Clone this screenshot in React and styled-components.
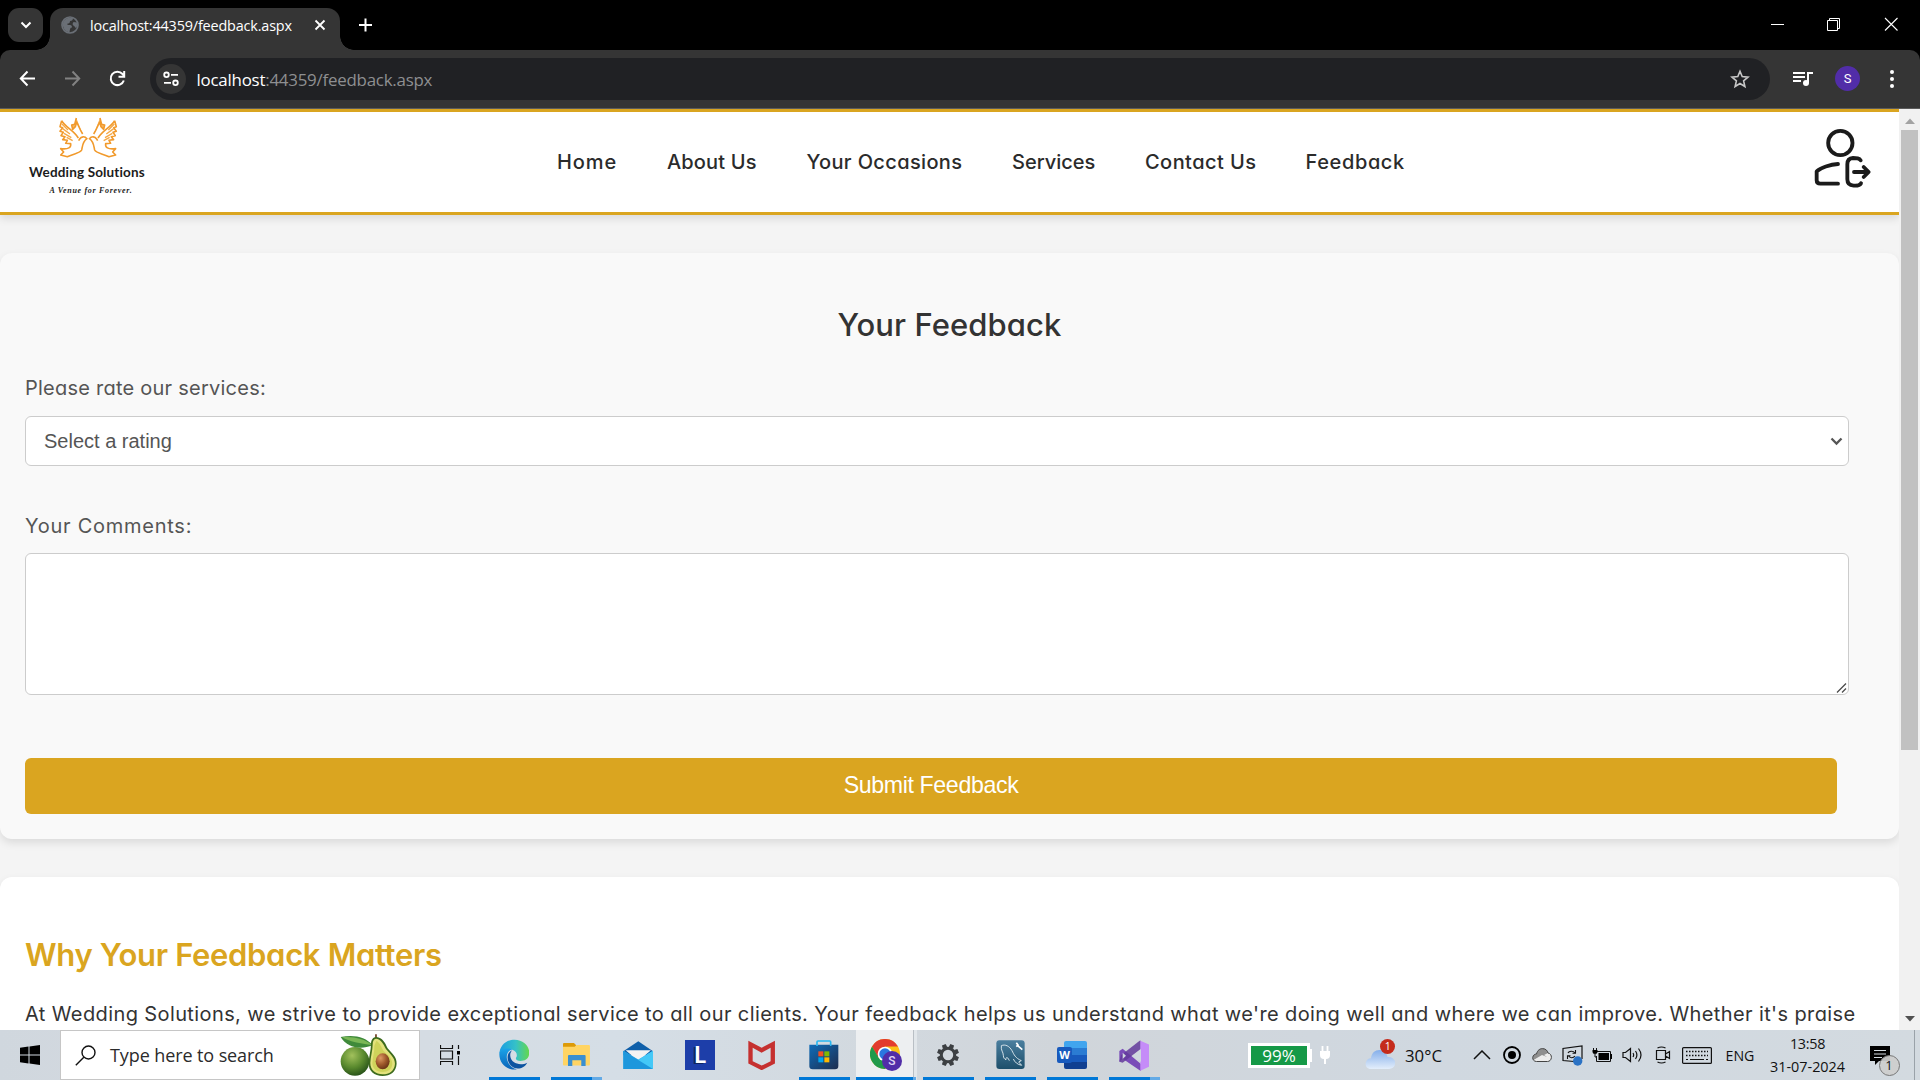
import React from "react";
import styled, { createGlobalStyle } from "styled-components";

const ui = '"Open Sans", "Noto Sans", sans-serif';
const brand = 'Inter, "Open Sans", sans-serif';
const gold = "#daa520";

const GlobalStyle = createGlobalStyle`
  * { box-sizing: border-box; }
  html, body { margin: 0; padding: 0; overflow: hidden; }
  svg { display: block; flex: none; }
`;

const Screen = styled.div`
  display: flex;
  flex-direction: column;
  width: 1920px;
  height: 1080px;
  overflow: hidden;
  background: #000;
`;

/* Browser frame */
const TabStrip = styled.div`
  display: flex;
  height: 50px;
  flex: none;
  background: #000;
  color: #fff;
`;
const TabSearch = styled.div`
  display: flex;
  align-items: center;
  justify-content: center;
  width: 35px;
  height: 34px;
  margin: 8px 7px 0 8px;
  border-radius: 11px;
  background: #353535;
`;
const Tab = styled.div`
  position: relative;
  display: flex;
  align-items: center;
  width: 290px;
  height: 42px;
  margin-top: 8px;
  padding: 0 0 8px 11px;
  border-radius: 13px 13px 0 0;
  background: #353535;
  &::before, &::after {
    content: "";
    position: absolute;
    bottom: 0;
    width: 14px;
    height: 14px;
  }
  &::before { left: -14px; background: radial-gradient(circle at 0 0, transparent 13.5px, #353535 14px); }
  &::after { right: -14px; background: radial-gradient(circle at 100% 0, transparent 13.5px, #353535 14px); }
`;
const TabTitle = styled.span`
  width: 224px;
  margin-left: 11px;
  padding-top: 1px;
  font: 14.4px/20px ${ui};
  letter-spacing: -0.16px;
  white-space: nowrap;
`;
const NewTab = styled.div`
  display: flex;
  margin: 18px 0 0 19px;
  flex: 1;
`;
const WindowButtons = styled.div`
  display: flex;
  gap: 43px;
  padding: 17px 22px 0 0;
`;
const Toolbar = styled.div`
  display: flex;
  align-items: center;
  height: 59px;
  flex: none;
  padding: 0 19px 1px 19px;
  border-radius: 10px 10px 0 0;
  border-bottom: 1px solid #5b5b5b;
  background: #353535;
`;
const NavButtons = styled.div`
  display: flex;
  gap: 28px;
  width: 131px;
`;
const Omnibox = styled.div`
  display: flex;
  align-items: center;
  width: 1620px;
  height: 42px;
  padding: 0 20px 0 6px;
  border-radius: 21px;
  background: #202124;
`;
const SiteInfo = styled.div`
  display: flex;
  align-items: center;
  justify-content: center;
  width: 30px;
  height: 30px;
  border-radius: 50%;
  background: #353535;
`;
const Url = styled.span`
  flex: 1;
  margin-left: 10.5px;
  padding-top: 2px;
  font: 16.9px/24px ${ui};
  letter-spacing: -0.23px;
  color: #8e8f91;
  white-space: nowrap;
  b { font-weight: 400; color: #fff; }
`;
const ToolbarEnd = styled.div`
  display: flex;
  align-items: center;
  margin-left: 23px;
`;
const Avatar = styled.div`
  width: 25px;
  height: 25px;
  margin: 0 30px 0 22px;
  border-radius: 50%;
  background: #512da8;
  color: #fff;
  font: 13px/25px Roboto, sans-serif;
  text-align: center;
`;

/* Web page */
const Viewport = styled.div`
  display: flex;
  height: 921px;
  flex: none;
  overflow: hidden;
`;
const Page = styled.main`
  width: 1899px;
  overflow: hidden;
  background: #f4f4f4;
  font-family: ${brand};
  font-feature-settings: "cv11";
`;
const ScrollTrack = styled.div`
  display: flex;
  flex-direction: column;
  align-items: center;
  width: 21px;
  background: #f1f1f1;
`;
const ScrollArrow = styled.div`
  height: 15px;
  padding-top: ${(p) => p.$pad}px;
`;
const ScrollThumb = styled.div`
  width: 17px;
  height: 620px;
  margin: 6px 0 auto;
  background: #c1c1c1;
`;
const Header = styled.header`
  display: flex;
  height: 106px;
  border-top: 3px solid ${gold};
  border-bottom: 3px solid ${gold};
  background: #fff;
  box-shadow: 0 4px 8px rgba(0, 0, 0, 0.1);
`;
const Logo = styled.div`
  display: flex;
  flex-direction: column;
  align-items: center;
  width: 122px;
  height: 84px;
  margin: 4px 0 0 26px;
  color: #1c1c1c;
`;
const LogoMark = styled.div`
  padding-left: 3px;
`;
const LogoName = styled.div`
  margin-top: 5px;
  font: 700 13.5px/16px Lato, sans-serif;
  letter-spacing: 0.15px;
  white-space: nowrap;
`;
const LogoTag = styled.div`
  margin-top: 5px;
  padding-left: 8px;
  font: italic 700 8px/11px "Liberation Serif", serif;
  letter-spacing: 0.7px;
  white-space: nowrap;
`;
const Menu = styled.nav`
  display: flex;
  gap: 50px;
  width: 1253px;
  padding: 36px 0 0 409px;
`;
const MenuLink = styled.a`
  width: ${(p) => p.$w}px;
  font-weight: 500;
  font-size: 20px;
  line-height: 28px;
  letter-spacing: ${(p) => p.$ls}px;
  white-space: nowrap;
  color: #2b2b2b;
`;
const SignOut = styled.a`
  margin: 15px 0 0 412px;
`;
const Card = styled.section`
  display: flex;
  flex-direction: column;
  align-items: flex-start;
  height: 586px;
  margin-top: 38px;
  padding: 0 25px;
  border-radius: 12px;
  background: ${(p) => p.$bg};
  box-shadow: 0 4px 8px rgba(0, 0, 0, 0.1);
`;
const Heading = styled.h2`
  margin: ${(p) => p.$top}px 0 0;
  align-self: ${(p) => (p.$center ? "center" : "flex-start")};
  font-size: 31px;
  line-height: 44px;
  font-weight: ${(p) => p.$weight};
  letter-spacing: ${(p) => p.$ls}px;
  white-space: nowrap;
  color: ${(p) => p.$color};
`;
const Label = styled.label`
  margin-top: ${(p) => p.$top}px;
  font-size: 20px;
  line-height: 30px;
  letter-spacing: ${(p) => p.$ls}px;
  white-space: nowrap;
  color: #555;
`;
const Field = styled.div`
  position: relative;
  display: flex;
  margin-top: ${(p) => p.$top}px;
`;
const FieldMark = styled.span`
  position: absolute;
  right: ${(p) => p.$right}px;
  bottom: ${(p) => p.$bottom}px;
`;
const Select = styled.select`
  width: 1824px;
  height: 50px;
  padding: 0 18px;
  appearance: none;
  border: 1px solid #ccc;
  border-radius: 6px;
  background: #fff;
  color: #555;
  font: 20px "Liberation Sans", Arial, sans-serif;
`;
const Comments = styled.textarea`
  width: 1824px;
  height: 142px;
  padding: 12px 18px;
  resize: none;
  border: 1px solid #ccc;
  border-radius: 6px;
  background: #fff;
  font: 20px "Liberation Sans", Arial, sans-serif;
`;
const Submit = styled.button`
  width: 1812px;
  height: 56px;
  margin-top: 63px;
  padding: 0 0 1px;
  border: 0;
  border-radius: 6px;
  background: ${gold};
  color: #fff;
  font: 23.2px "Liberation Sans", Arial, sans-serif;
  letter-spacing: -0.38px;
`;
const Copy = styled.p`
  margin: 21px 0 0;
  font-size: 20px;
  line-height: 32px;
  letter-spacing: 0.394px;
  white-space: nowrap;
  color: #333;
`;

/* Taskbar */
const Taskbar = styled.footer`
  display: flex;
  height: 50px;
  flex: none;
  background: linear-gradient(90deg, #d0d7de, #d5dae0 12%, #d5dee6 32%, #d0d5da 55%, #d0d8e0 75%, #d3dae0);
  color: #111;
  font-family: ${ui};
`;
const Slot = styled.div`
  display: flex;
  align-items: center;
  justify-content: center;
  width: ${(p) => p.$w}px;
  margin-left: ${(p) => p.$ml || 0}px;
  flex: none;
  font-size: ${(p) => p.$size || 16}px;
  white-space: nowrap;
`;
const SearchBox = styled.div`
  display: flex;
  align-items: center;
  width: 360px;
  padding: 0 21px 0 14px;
  border: 1px solid #c6c6c6;
  background: #fff;
`;
const SearchText = styled.span`
  flex: 1;
  margin-left: 14px;
  font-size: 18px;
  letter-spacing: -0.1px;
  color: #2b2b2b;
  white-space: nowrap;
`;
const AppList = styled.div`
  display: flex;
  margin-left: 3px;
`;
const AppCell = styled.div`
  display: flex;
  flex-direction: column;
  align-items: center;
  width: 62px;
  background: ${(p) => (p.$active ? "linear-gradient(90deg, transparent 1px, #edeff1 1px 58px, #b9bfc5 58px 59px, #e2e7eb 59px)" : "none")};
`;
const AppIcon = styled.div`
  display: flex;
  align-items: center;
  justify-content: center;
  height: 47px;
  padding-top: 3px;
`;
const Underline = styled.div`
  width: ${(p) => (p.$kind === "active" ? 60 : 51)}px;
  height: 3px;
  background: ${(p) =>
    p.$kind === "none" ? "none"
      : p.$kind === "stack" ? "linear-gradient(90deg, #0078d7 41px, #63aae6 41px)"
      : p.$kind === "active" ? "linear-gradient(90deg, #0078d7 57px, #63aae6 57px)"
      : "#0078d7"};
`;
const BatteryBadge = styled.div`
  display: flex;
  align-items: center;
  justify-content: center;
  width: 62px;
  height: 25px;
  border: 3px solid #fff;
  background: #159947;
  color: #fff;
  font-size: 17px;
`;
const Clock = styled.div`
  display: flex;
  flex-direction: column;
  align-items: center;
  width: 85px;
  margin-right: 1px;
  padding-top: 2px;
  font-size: 14.4px;
  line-height: 23px;
`;
const Time = styled.span`
  letter-spacing: ${(p) => p.$ls || 0}px;
`;
const WeatherWrap = styled.div`
  position: relative;
  padding-top: 8px;
`;
const AlertDot = styled.span`
  position: absolute;
  right: 0;
  top: -1px;
  width: 15px;
  height: 15px;
  border-radius: 50%;
  background: #c42b1c;
  color: #fff;
  font-size: 10.5px;
  line-height: 15px;
  text-align: center;
`;
const Temp = styled.div`
  display: flex;
  align-items: center;
  width: 62px;
  margin-left: 7px;
  font-size: 16.8px;
`;
const NoticeWrap = styled.div`
  position: relative;
  padding-right: 1px;
`;
const NoticeCount = styled.span`
  position: absolute;
  left: 9px;
  top: 9px;
  width: 21px;
  height: 21px;
  border: 1px solid #777;
  border-radius: 50%;
  background: rgba(205, 205, 205, 0.93);
  font-size: 13px;
  line-height: 19px;
  text-align: center;
`;
const ShowDesktop = styled.div`
  width: 6px;
  margin-left: 5px;
  border-left: 1px solid #9aa2a9;
`;

const Svg = ({ box, w, h, children }) => (
  <svg viewBox={box} width={w} height={h} fill="none">{children}</svg>
);

function Dove() {
  return (
    <g strokeLinejoin="round">
      <path d="M187 362 C196 380 224 392 237 414 M187 362 L182 380 L190 383 L182 394 L192 397 L185 407 L197 410 L190 419 L204 421 L199 430 L214 431 C216 442 208 449 184 446 L193 456 L184 465 L204 470 C225 460 242 460 247 450 C250 436 250 424 263 416 C256 408 246 409 241 417 L238 422" stroke="#f19a2c" strokeWidth="4.8" />
      <path d="M188 372 L206 390 M190 386 L212 402 M194 400 L216 413 M202 412 L220 422" stroke="#f5a845" strokeWidth="4" />
      <path d="M231 354 L226 373 L217 375 L220 388 L228 380 L232 366 C238 378 242 390 250 402" stroke="#f19a2c" strokeWidth="4.8" fill="#f7b765" />
    </g>
  );
}
const Doves = () => (
  <Svg box="176 348 182 128" w="60.67" h="42.67">
    <Dove />
    <g transform="translate(533 0) scale(-1 1)"><Dove /></g>
  </Svg>
);
const LogoutUser = () => (
  <Svg box="940 380 180 186" w="60" h="62">
    <g stroke="#1b1b1b" strokeWidth="11.5" strokeLinecap="round" strokeLinejoin="round">
      <circle cx="1022" cy="428" r="36.5" />
      <path d="M1015 491 C992 492 962 503 951 513 V540 Q951 550 962 550 H1015" />
      <path d="M1083 480 C1079 473 1072 473 1060 473 Q1043 474 1043 492 V537 Q1043 555 1062 556 Q1080 557 1084 549" />
      <path d="M1063 515 H1105 M1092 500 L1107 515 L1092 530" />
    </g>
  </Svg>
);
const Avocado = () => (
  <Svg box="1018 36 178 130" w="59.3" h="43.3">
    <defs>
      <radialGradient id="skin" cx=".4" cy=".3" r=".75"><stop offset="0" stopColor="#a2c15c" /><stop offset=".55" stopColor="#5a8a2e" /><stop offset="1" stopColor="#234d17" /></radialGradient>
      <radialGradient id="pit" cx=".35" cy=".3" r=".8"><stop offset="0" stopColor="#dd9a63" /><stop offset=".5" stopColor="#a05a2c" /><stop offset="1" stopColor="#5f2c12" /></radialGradient>
    </defs>
    <circle cx="1066" cy="121" r="43" fill="url(#skin)" />
    <path d="M1023 48 C1060 40 1098 46 1119 73 C1082 88 1042 80 1023 48Z" fill="#3f8a3a" />
    <path d="M1027 49 C1062 46 1094 54 1117 72 C1082 68 1048 62 1027 49Z" fill="#7ab756" />
    <path d="M1129 40 V52" stroke="#6b3a1d" strokeWidth="5" />
    <path d="M1131 48 C1148 50 1156 64 1164 82 C1176 96 1192 108 1191 128 C1190 152 1172 165 1149 165 C1124 165 1106 150 1107 126 C1108 106 1114 88 1114 70 C1114 56 1120 48 1131 48Z" fill="#3d6b1e" />
    <path d="M1131 53 C1144 55 1151 68 1159 84 C1171 99 1186 110 1186 128 C1185 149 1169 160 1149 160 C1128 160 1112 147 1112 126 C1113 106 1119 88 1119 71 C1119 59 1123 53 1131 53Z" fill="#e3e27c" />
    <path d="M1130 60 C1140 64 1144 76 1152 90 C1165 102 1178 112 1178 129 C1177 145 1165 153 1149 153 C1130 153 1118 142 1118 126 C1119 108 1125 92 1124 74Z" fill="#cfd35a" />
    <ellipse cx="1149" cy="121" rx="21" ry="24" fill="url(#pit)" />
  </Svg>
);

const Edge = () => (
  <Svg box="56 58 92 94" w="30.6" h="31.3">
    <defs>
      <linearGradient id="edgeTop" x1="0" x2="1"><stop stopColor="#1b9de2" /><stop offset=".55" stopColor="#35c1c8" /><stop offset="1" stopColor="#65d84b" /></linearGradient>
      <linearGradient id="edgeLow" x1="0" y1="0" x2="0" y2="1"><stop stopColor="#1ba3e8" /><stop offset="1" stopColor="#0a63b8" /></linearGradient>
    </defs>
    <path d="M57 104 C58 78 77 60 103 60 C130 60 147 80 147 99 C147 116 135 124 121 124 C110 124 104 119 108 113 C112 106 109 94 96 90 C78 84 60 92 57 104Z" fill="url(#edgeTop)" />
    <path d="M57 104 C58 88 80 82 96 90 C84 91 77 104 80 118 C84 136 96 147 110 149 C80 154 57 132 57 104Z" fill="url(#edgeLow)" />
    <path d="M93 93 C78 101 78 126 94 140 C110 153 132 146 141 129 C120 140 92 131 90 110 C89 102 91 97 96 92Z" fill="#0c53a0" />
  </Svg>
);
const Explorer = () => (
  <Svg box="244 66 86 76" w="28.6" h="25.3">
    <path d="M247 72 Q247 69 250 69 H280 L286 75 V90 H247Z" fill="#dd9a07" />
    <path d="M247 80 H282 L288 75 H325 Q328 75 328 78 V134 Q328 137 325 137 H250 Q247 137 247 134Z" fill="#ffd463" />
    <path d="M262 138 V108 Q262 105 265 105 H312 Q315 105 315 108 V138 H302 V121 H275 V138Z" fill="#3a8fd0" />
  </Svg>
);
const Mail = () => (
  <Svg box="428 62 92 86" w="30.6" h="28.6">
    <path d="M429 93 L474 63 L519 93 V105 H429Z" fill="#0f5fa9" />
    <path d="M436 90 H512 L474 122Z" fill="#f3f3f3" />
    <path d="M429 91 L474 118 L519 91 V147 H429Z" fill="#35b4ee" />
    <path d="M429 147 L519 91 V147Z" fill="#44c8f7" />
    <path d="M429 91 L519 147 H429Z" fill="#1e97dc" />
  </Svg>
);
const LetterTile = styled.div`
  width: 30px;
  height: 30px;
  background: #1d3ea9;
  color: #fff;
  font: 700 23px/29px Lato, sans-serif;
  text-align: center;
  text-shadow: -2px 1px 0 #10265f;
`;
const LetterApp = () => <LetterTile>L</LetterTile>;
const McAfee = () => (
  <Svg box="804 58 82 92" w="27.3" h="30.6">
    <path d="M805 60 L845 81 L885 60 V129 L845 149 L805 129Z M818 81 V122 L845 135 L872 122 V81 L845 96Z" fill="#c5302f" fillRule="evenodd" />
  </Svg>
);
const Store = () => (
  <Svg box="986 62 90 90" w="30" h="30">
    <defs><linearGradient id="bag" x1="0" y1="0" x2="1" y2="1"><stop stopColor="#0f6cb8" /><stop offset="1" stopColor="#1e2d4e" /></linearGradient></defs>
    <path d="M987 76 H1074 V140 Q1074 150 1064 150 H997 Q987 150 987 140Z" fill="url(#bag)" />
    <path d="M1010 80 V68 Q1010 65 1013 65 H1048 Q1051 65 1051 68 V80" stroke="#29b6f0" strokeWidth="5" />
    <path d="M1014 96h15v15h-15z" fill="#f25022" /><path d="M1032 96h15v15h-15z" fill="#7fba00" />
    <path d="M1014 114h15v15h-15z" fill="#00a4ef" /><path d="M1032 114h15v15h-15z" fill="#ffb900" />
  </Svg>
);
const ChromeWrap = styled.div`
  position: relative;
  width: 32px;
  height: 32px;
`;
const ChromeBadge = styled.span`
  position: absolute;
  left: 12px;
  top: 12px;
  width: 20px;
  height: 20px;
  border-radius: 50%;
  background: #512da8;
  color: #e0d6f4;
  font: 500 12px/20px Roboto, sans-serif;
  text-align: center;
`;
const ChromeIcon = () => (
  <ChromeWrap>
    <Svg box="0 0 96 96" w="32" h="32">
      <circle cx="45" cy="45" r="45" fill="#fbc116" />
      <path d="M6 22.5 A45 45 0 0 1 84 22.5 H45 L25 56Z" fill="#e33b2e" />
      <path d="M6 22.5 A45 45 0 0 0 45 90 L64 56 H26Z" fill="#219a4b" />
      <circle cx="45" cy="45" r="22" fill="#fff" />
      <circle cx="45" cy="45" r="17" fill="#2a76e0" />
    </Svg>
    <ChromeBadge>S</ChromeBadge>
  </ChromeWrap>
);
const Gear = () => (
  <Svg box="-12 -12 24 24" w="24" h="24">
    <circle r="6.7" stroke="#3c3f42" strokeWidth="3" />
    {[0, 45, 90, 135, 180, 225, 270, 315].map((a) => (
      <path key={a} d="M-2 -11 H2 L2.4 -7.4 H-2.4Z" transform={`rotate(${a + 22.5})`} fill="#3c3f42" />
    ))}
  </Svg>
);
const Workbench = () => (
  <Svg box="286 60 87 88" w="29" h="29.3">
    <defs><linearGradient id="wb" x1="0" y1="0" x2="0" y2="1"><stop stopColor="#4b7f9f" /><stop offset="1" stopColor="#1d4f6b" /></linearGradient></defs>
    <rect x="287" y="61" width="85" height="86" rx="9" fill="url(#wb)" />
    <path d="M302 77 C314 72 326 78 334 92 C340 104 344 114 362 122 L354 126 L363 136 C350 134 342 126 338 117 M302 77 C300 92 308 96 308 106 C308 114 312 118 316 119 C315 112 320 108 326 122" stroke="#e9f1f5" strokeWidth="2.6" />
    <path d="M347 68 L352 75 L347 80 M351 77 L365 89" stroke="#fff" strokeWidth="5" />
  </Svg>
);
const WordTile = styled.div`
  position: relative;
  display: flex;
  align-items: center;
  width: 30px;
  height: 28px;
`;
const WordPages = styled.div`
  position: absolute;
  left: 7px;
  top: 0;
  width: 23px;
  height: 28px;
  border-radius: 2px;
  background: linear-gradient(#41a5ee 25%, #2b7cd3 25% 50%, #185abd 50% 75%, #103f91 75%);
`;
const WordLetter = styled.div`
  position: relative;
  width: 15px;
  height: 16px;
  border-radius: 2px;
  background: #185abd;
  color: #fff;
  font: 700 11px/16px "Open Sans", sans-serif;
  text-align: center;
`;
const Word = () => (
  <WordTile><WordPages /><WordLetter>W</WordLetter></WordTile>
);
const VisualStudio = () => (
  <Svg box="656 58 92 93" w="30.6" h="31">
    <path d="M657 91 L667 84 L722 130 V150 L718 149 L667 114 L657 123Z" fill="#7a4cb8" />
    <path d="M657 123 L667 126 L722 84 V60 L718 60 L662 104Z" fill="#63399b" opacity=".85" />
    <path d="M720 60 L747 72 V138 L720 150 Z" fill="#c58cf8" />
    <path d="M722 86 L697 105 L722 124Z" fill="#d0d8df" />
    <path d="M667 96 V115 L677 105Z" fill="#d0d8df" />
  </Svg>
);

const apps = [
  { name: "edge", icon: Edge, kind: "open" },
  { name: "explorer", icon: Explorer, kind: "stack" },
  { name: "mail", icon: Mail, kind: "none" },
  { name: "letter", icon: LetterApp, kind: "none" },
  { name: "mcafee", icon: McAfee, kind: "none" },
  { name: "store", icon: Store, kind: "open" },
  { name: "chrome", icon: ChromeIcon, kind: "active" },
  { name: "settings", icon: Gear, kind: "open" },
  { name: "workbench", icon: Workbench, kind: "open" },
  { name: "word", icon: Word, kind: "open" },
  { name: "vs", icon: VisualStudio, kind: "stack" },
];

const links = [
  { text: "Home", w: 60, ls: 0.88 },
  { text: "About Us", w: 89.5, ls: 0.15 },
  { text: "Your Occasions", w: 155.5, ls: 0.36 },
  { text: "Services", w: 83, ls: 0 },
  { text: "Contact Us", w: 110.5, ls: 0.44 },
  { text: "Feedback", w: 99, ls: 0.62 },
];

function BrowserFrame() {
  return (
    <>
      <TabStrip>
        <TabSearch><Svg box="0 0 12 8" w="12" h="8"><path d="M1.5 1.5 L6 6 L10.5 1.5" stroke="#fff" strokeWidth="2" /></Svg></TabSearch>
        <Tab>
          <Svg box="0 0 18 18" w="18" h="18">
            <circle cx="9" cy="9" r="8" stroke="#6a6f76" strokeWidth="1.7" />
            <path d="M2 7 C3 3 7 1 12 2 C12 4 11 5 9 5 C9 7 8 7.5 6.500 7.500 V9 H9 C10.500 9 11 10 11 11.500 C9 11.500 9 13 8.500 16.500 C3 15 1.500 11 2 7Z M12.500 6 L16 6.500 C16.500 9 16 11 15 12.500 C14 10 12 10 11.500 8Z" fill="#6a6f76" />
          </Svg>
          <TabTitle>localhost:44359/feedback.aspx</TabTitle>
          <Svg box="0 0 12 12" w="12" h="12"><path d="M1.500 1.500 L10.500 10.500 M10.500 1.500 L1.500 10.500" stroke="#fff" strokeWidth="1.8" /></Svg>
        </Tab>
        <NewTab><Svg box="0 0 14 14" w="14" h="14"><path d="M6.500 .5 V13.500 M0 7 H13" stroke="#fff" strokeWidth="2" /></Svg></NewTab>
        <WindowButtons>
          <Svg box="0 0 14 14" w="14" h="14"><path d="M1 7.500 H14" stroke="#fff" /></Svg>
          <Svg box="0 0 14 14" w="14" h="14"><path d="M.5 3.500 H10.500 V13.500 H.5Z M2.500 3 V1.500 H12.500 V11.500 H11" stroke="#fff" /></Svg>
          <Svg box="0 0 14 14" w="14" h="14"><path d="M1 1 L13.500 13.500 M13.500 1 L1 13.500" stroke="#fff" strokeWidth="1.1" /></Svg>
        </WindowButtons>
      </TabStrip>
      <Toolbar>
        <NavButtons>
          <Svg box="0 0 17 17" w="17" h="17"><path d="M16 8.500 H2 M8.500 1.500 L1.800 8.500 L8.500 15.500" stroke="#fff" strokeWidth="2" /></Svg>
          <Svg box="0 0 17 17" w="17" h="17"><path d="M1 8.500 H15 M8.500 1.500 L15.200 8.500 L8.500 15.500" stroke="#828282" strokeWidth="2" /></Svg>
          <Svg box="0 0 17 17" w="17" h="17"><path d="M14.800 10.500 A6.700 6.700 0 1 1 13.500 4 L15 6 M15.200 1 V6.700 H9.500" stroke="#fff" strokeWidth="2" /></Svg>
        </NavButtons>
        <Omnibox>
          <SiteInfo>
            <Svg box="0 0 16 16" w="16" h="16">
              <g stroke="#fff" strokeWidth="1.8"><circle cx="3.500" cy="3.800" r="2.300" /><path d="M8 3.800 H15 M1 11.800 H8" /><circle cx="12.500" cy="11.800" r="2.300" /></g>
            </Svg>
          </SiteInfo>
          <Url><b>localhost</b>:44359/feedback.aspx</Url>
          <Svg box="0 0 20 20" w="20" h="20"><path d="M10 2.300 L12.200 7.600 L18 8.100 L13.600 11.900 L14.900 17.500 L10 14.500 L5.100 17.500 L6.400 11.900 L2 8.100 L7.800 7.600Z" stroke="#c7c7c7" strokeWidth="1.6" /></Svg>
        </Omnibox>
        <ToolbarEnd>
          <Svg box="0 0 20 16" w="20" h="16">
            <path d="M0 2 H12 M0 6 H12 M0 10 H8 M15 12 V2 H20" stroke="#fff" strokeWidth="2" />
            <circle cx="13" cy="12" r="3" fill="#fff" />
          </Svg>
          <Avatar>S</Avatar>
          <Svg box="0 0 4 18" w="4" h="18"><g fill="#fff"><circle cx="2" cy="2" r="2" /><circle cx="2" cy="9" r="2" /><circle cx="2" cy="16" r="2" /></g></Svg>
        </ToolbarEnd>
      </Toolbar>
    </>
  );
}

function FeedbackPage() {
  return (
    <Viewport>
      <Page>
        <Header>
          <Logo>
            <LogoMark><Doves /></LogoMark>
            <LogoName>Wedding Solutions</LogoName>
            <LogoTag>A Venue for Forever.</LogoTag>
          </Logo>
          <Menu>
            {links.map((l) => <MenuLink key={l.text} $w={l.w} $ls={l.ls}>{l.text}</MenuLink>)}
          </Menu>
          <SignOut><LogoutUser /></SignOut>
        </Header>
        <Card $bg="#f9f9f9">
          <Heading $top={50} $center $weight={500} $ls={0.08} $color="#333">Your Feedback</Heading>
          <Label $top={26} $ls={0.24}>Please rate our services:</Label>
          <Field $top={13}>
            <Select defaultValue="0"><option value="0">Select a rating</option></Select>
            <FieldMark $right={6} $bottom={20}>
              <Svg box="0 0 13 9" w="13" h="9"><path d="M1.500 1.500 L6.500 6.500 L11.500 1.500" stroke="#555" strokeWidth="2.300" /></Svg>
            </FieldMark>
          </Field>
          <Label $top={45} $ls={0.74}>Your Comments:</Label>
          <Field $top={12}>
            <Comments readOnly />
            <FieldMark $right={2} $bottom={2}>
              <Svg box="0 0 11 10" w="11" h="10"><path d="M1 9.500 L10 .5 M6 9.500 L10 5.500" stroke="#4d4d4d" strokeWidth="1.300" /></Svg>
            </FieldMark>
          </Field>
          <Submit>Submit Feedback</Submit>
        </Card>
        <Card $bg="#fff">
          <Heading $top={56} $weight={600} $ls={-0.33} $color={gold}>Why Your Feedback Matters</Heading>
          <Copy>At Wedding Solutions, we strive to provide exceptional service to all our clients. Your feedback helps us understand what we're doing well and where we can improve. Whether it's praise</Copy>
        </Card>
      </Page>
      <ScrollTrack>
        <ScrollArrow $pad={9}><Svg box="0 0 10 6" w="10" h="6"><path d="M0 6 L5 0.500 L10 6Z" fill="#a3a3a3" /></Svg></ScrollArrow>
        <ScrollThumb />
        <ScrollArrow $pad={1}><Svg box="0 0 10 6" w="10" h="6"><path d="M0 0 L5 5.500 L10 0Z" fill="#505050" /></Svg></ScrollArrow>
      </ScrollTrack>
    </Viewport>
  );
}

function SystemTray() {
  return (
    <>
      <Slot $w={64} $ml={83}>
        <BatteryBadge>99%</BatteryBadge>
        <Svg box="0 0 2 13" w="2" h="13"><path d="M0 0 H2 V13 H0Z" fill="#fff" /></Svg>
      </Slot>
      <Slot $w={26}>
        <Svg box="0 0 12 20" w="12" h="20"><path d="M3.500 1 V7 M8.500 1 V7" stroke="#fff" strokeWidth="1.800" /><path d="M1 6 H11 V10 Q11 14 7 14 V19 H5 V14 Q1 14 1 10Z" fill="#fff" /></Svg>
      </Slot>
      <Slot $w={36} $ml={24}><WeatherWrap>
        <Svg box="1394 84 92 64" w="30.6" h="21.300">
          <defs><linearGradient id="cloud" x1="0" y1="0" x2="0" y2="1"><stop stopColor="#84aeea" /><stop offset="1" stopColor="#e3eefb" /></linearGradient></defs>
          <path d="M1412 147 C1400 147 1395 138 1396 130 C1397 121 1404 115 1412 115 C1414 98 1424 90 1438 90 C1452 90 1460 100 1462 111 C1476 110 1485 119 1485 129 C1485 140 1477 147 1466 147Z" fill="url(#cloud)" />
        </Svg>
        <AlertDot>1</AlertDot>
      </WeatherWrap></Slot>
      <Temp>30°C</Temp>
      <Slot $w={30}><Svg box="0 0 18 10" w="18" h="10"><path d="M1 9 L9 1 L17 9" stroke="#111" strokeWidth="1.500" /></Svg></Slot>
      <Slot $w={30}><Svg box="0 0 18 18" w="18" h="18"><circle cx="9" cy="9" r="8" stroke="#000" strokeWidth="1.800" /><circle cx="9" cy="9" r="4" fill="#000" /></Svg></Slot>
      <Slot $w={30}><Svg box="0 0 20 14" w="20" h="14">
        <path d="M4.500 13.500 C2 13.500 .5 11.500 .7 9.500 C1 7 3 6 4.500 6 C5.500 2 8 .6 10.500 .6 C13.500 .6 15.500 2.500 16 5 C18.500 5.500 19.500 7.500 19.400 9.500 C19.200 12 17.500 13.500 15.500 13.500Z" fill="#ededed" />
        <path d="M.7 9.500 C1 7 3 6 4.500 6 C5.500 2 8 .6 10.500 .6 C13.500 .6 15.500 2.500 16 5 L12 7 L15 9 L10 7 L1.500 12Z" fill="#8f8f8f" />
        <path d="M4.500 13.500 C2 13.500 .5 11.500 .7 9.500 C1 7 3 6 4.500 6 C5.500 2 8 .6 10.500 .6 C13.500 .6 15.500 2.500 16 5 C18.500 5.500 19.500 7.500 19.400 9.500 C19.200 12 17.500 13.500 15.500 13.500Z" stroke="#444" strokeWidth="1" />
      </Svg></Slot>
      <Slot $w={30}><Svg box="0 0 21 21" w="21" h="21">
        <path d="M12 16.500 L1 15.500 V3.500 L20 1 V14" stroke="#111" strokeWidth="1.200" />
        <path d="M6 8 C7 6 11 5.500 13 8 M13.500 5 V8.300 H10.500 M13 11 C11 13.500 8 13 6.500 11 M5.500 14 V10.700 H8.500" stroke="#111" strokeWidth="1.100" />
        <circle cx="15.700" cy="16" r="4.700" fill="#2b72c4" />
      </Svg></Slot>
      <Slot $w={30}><Svg box="0 0 20 14" w="20" h="14">
        <path d="M5 3.500 H18.500 V13.500 H4.500 V8" stroke="#111" strokeWidth="1" /><path d="M6.500 5 H17 V12 H6.500Z M18.500 6 H20 V11 H18.500Z" fill="#000" />
        <path d="M1.500 0 V2 M4.500 0 V2 M3 6 V9 H5" stroke="#111" /><path d="M.5 2 H5.500 V4 Q5.500 6 3 6 Q.5 6 .5 4Z" fill="#000" />
      </Svg></Slot>
      <Slot $w={30}><Svg box="0 0 21 16" w="21" h="16">
        <path d="M1 5.500 H3.500 L8.500 1.500 V14.500 L3.500 10.500 H1Z M11 6 Q12.300 8 11 10 M13.500 4 Q16.300 8 13.500 12 M16.500 1.500 Q21.500 8 16.500 14.500" stroke="#111" strokeWidth="1.200" />
      </Svg></Slot>
      <Slot $w={32}><Svg box="0 0 16 18" w="16" h="18">
        <path d="M1.500 4.500 H10.500 V13.500 H1.500Z M10.500 8 L14.500 5.500 V12.500 L10.500 10 M2.500 2 Q6.500 0 10.500 2 M2.500 16 Q6.500 18 10.500 16" stroke="#111" strokeWidth="1.200" />
      </Svg></Slot>
      <Slot $w={36}><Svg box="0 0 30 17" w="30" h="17">
        <rect x=".6" y=".6" width="28.800" height="15.800" rx="1" stroke="#111" strokeWidth="1.200" />
        <path d="M4 4.500 H26 M4 8.500 H26" stroke="#111" strokeWidth="1.300" strokeDasharray="1.500 1.500" /><path d="M4 12.500 H6 M8 12.500 H22 M24 12.500 H26" stroke="#111" strokeWidth="1.200" />
      </Svg></Slot>
      <Slot $w={50} $size={14.2}>ENG</Slot>
      <Clock><Time $ls={-0.3}>13:58</Time><Time>31-07-2024</Time></Clock>
      <Slot $w={58}><NoticeWrap>
        <Svg box="0 0 20 19" w="20" h="19"><path d="M0 0 H20 V15 H9 L5 19 V15 H0Z" fill="#000" /><path d="M4 4.500 H16 M4 8 H16 M4 11.500 H12" stroke="#d3dae0" strokeWidth="1.200" /></Svg>
        <NoticeCount>1</NoticeCount>
      </NoticeWrap></Slot>
      <ShowDesktop />
    </>
  );
}

export default function App() {
  return (
    <Screen>
      <GlobalStyle />
      <BrowserFrame />
      <FeedbackPage />
      <Taskbar>
        <Slot $w={60}><Svg box="0 0 20 20" w="20" h="20"><path d="M0 2.800 L8.500 1.600 V9.500 H0Z M9.500 1.500 L20 0 V9.500 H9.500Z M0 10.500 H8.500 V18.400 L0 17.200Z M9.500 10.500 H20 V20 L9.500 18.500Z" fill="#000" /></Svg></Slot>
        <SearchBox>
          <Svg box="0 0 21 21" w="21" h="21"><circle cx="13.500" cy="7.500" r="6.500" stroke="#111" strokeWidth="1.400" /><path d="M8.800 12.200 L.8 20.200" stroke="#111" strokeWidth="1.400" /></Svg>
          <SearchText>Type here to search</SearchText>
          <Avocado />
        </SearchBox>
        <Slot $w={60}><Svg box="0 0 20 20" w="20" h="20"><path d="M.5 0 V3.500 H12.500 V0 M.5 20 V16.500 H12.500 V20 M.5 6 H12.500 V14 H.5Z M18.500 0 V4 M18.500 11 V20" stroke="#111" strokeWidth="1.200" /><path d="M17 6 H20 V9.500 H17Z" fill="#000" /></Svg></Slot>
        <AppList>
          {apps.map(({ name, icon: Icon, kind }) => (
            <AppCell key={name} $active={kind === "active"}>
              <AppIcon><Icon /></AppIcon>
              <Underline $kind={kind} />
            </AppCell>
          ))}
        </AppList>
        <SystemTray />
      </Taskbar>
    </Screen>
  );
}
